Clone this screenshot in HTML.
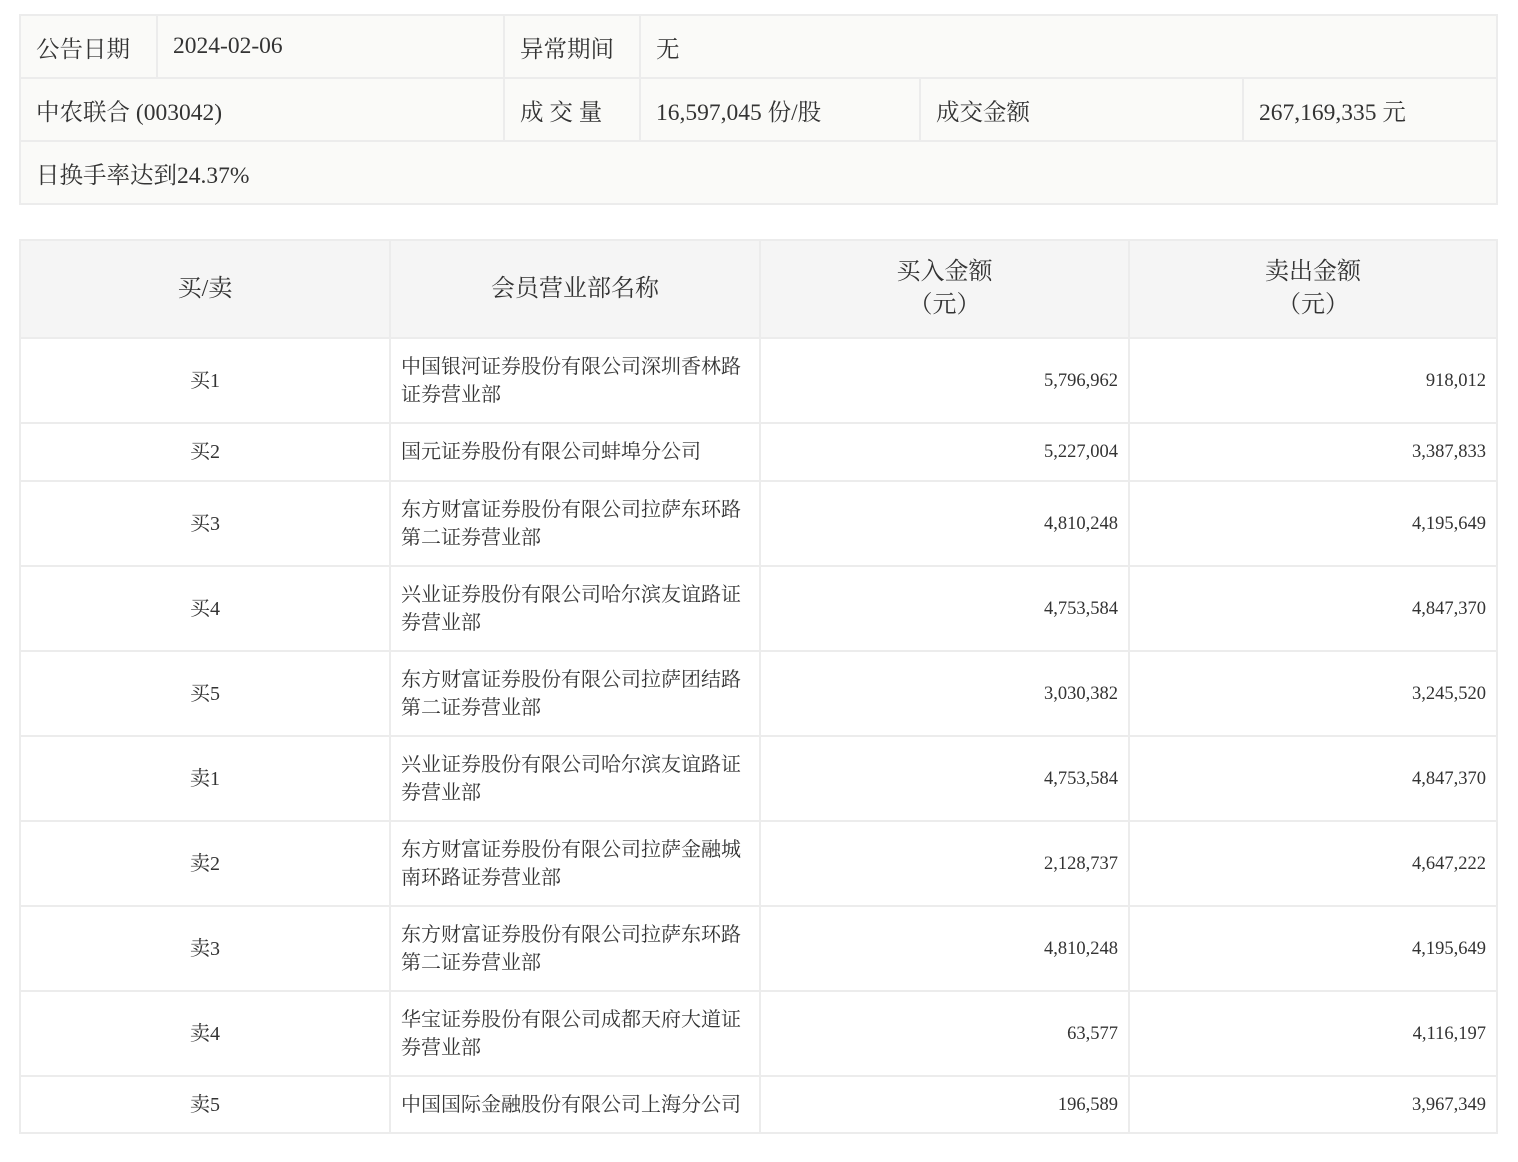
<!DOCTYPE html>
<html><head><meta charset="utf-8"><style>
*{margin:0;padding:0;box-sizing:border-box}
body{width:1518px;height:1162px;background:#fff;font-family:"Liberation Serif","Noto Serif CJK SC","Noto Serif CJK JP",serif;color:#333;position:relative}
table{border-collapse:collapse;table-layout:fixed;position:absolute;left:19px}
td{border:2px solid #ececec}
#t1{top:14px;width:1479px;background:#fafaf8;font-size:23.5px}
#t1 td{padding:0 0 0 15px;height:63px}
#t2{top:239px;width:1479px;font-size:20px}
#t2 th{background:#f5f5f5;border:2px solid #ececec;font-weight:normal;font-size:24px;height:98px;line-height:33px}
#t2 td{height:85px;line-height:28px}
#t2 tr.s td{height:58px}
#t2 tr.s2 td{height:57px}
#t2 td.c{text-align:center}
#t2 td.n{padding:0 8px 0 10px}
#t2 td.r{text-align:right;padding-right:10px;font-size:18.5px}
</style></head><body>
<table id="t1">
<colgroup><col style="width:137px"><col style="width:347px"><col style="width:136px"><col style="width:280px"><col style="width:323px"><col></colgroup>
<tr><td>公告日期</td><td>2024-02-06</td><td>异常期间</td><td colspan="3">无</td></tr>
<tr><td colspan="2">中农联合 (003042)</td><td>成 交 量</td><td>16,597,045 份/股</td><td>成交金额</td><td>267,169,335 元</td></tr>
<tr><td colspan="6">日换手率达到24.37%</td></tr>
</table>
<table id="t2">
<colgroup><col style="width:370px"><col style="width:370px"><col style="width:369px"><col></colgroup>
<tr><th>买/卖</th><th>会员营业部名称</th><th>买入金额<br>（元）</th><th>卖出金额<br>（元）</th></tr>
<tr><td class="c">买1</td><td class="n">中国银河证券股份有限公司深圳香林路<br>证券营业部</td><td class="r">5,796,962</td><td class="r">918,012</td></tr>
<tr class="s"><td class="c">买2</td><td class="n">国元证券股份有限公司蚌埠分公司</td><td class="r">5,227,004</td><td class="r">3,387,833</td></tr>
<tr><td class="c">买3</td><td class="n">东方财富证券股份有限公司拉萨东环路<br>第二证券营业部</td><td class="r">4,810,248</td><td class="r">4,195,649</td></tr>
<tr><td class="c">买4</td><td class="n">兴业证券股份有限公司哈尔滨友谊路证<br>券营业部</td><td class="r">4,753,584</td><td class="r">4,847,370</td></tr>
<tr><td class="c">买5</td><td class="n">东方财富证券股份有限公司拉萨团结路<br>第二证券营业部</td><td class="r">3,030,382</td><td class="r">3,245,520</td></tr>
<tr><td class="c">卖1</td><td class="n">兴业证券股份有限公司哈尔滨友谊路证<br>券营业部</td><td class="r">4,753,584</td><td class="r">4,847,370</td></tr>
<tr><td class="c">卖2</td><td class="n">东方财富证券股份有限公司拉萨金融城<br>南环路证券营业部</td><td class="r">2,128,737</td><td class="r">4,647,222</td></tr>
<tr><td class="c">卖3</td><td class="n">东方财富证券股份有限公司拉萨东环路<br>第二证券营业部</td><td class="r">4,810,248</td><td class="r">4,195,649</td></tr>
<tr><td class="c">卖4</td><td class="n">华宝证券股份有限公司成都天府大道证<br>券营业部</td><td class="r">63,577</td><td class="r">4,116,197</td></tr>
<tr class="s2"><td class="c">卖5</td><td class="n">中国国际金融股份有限公司上海分公司</td><td class="r">196,589</td><td class="r">3,967,349</td></tr>
</table>
</body></html>
